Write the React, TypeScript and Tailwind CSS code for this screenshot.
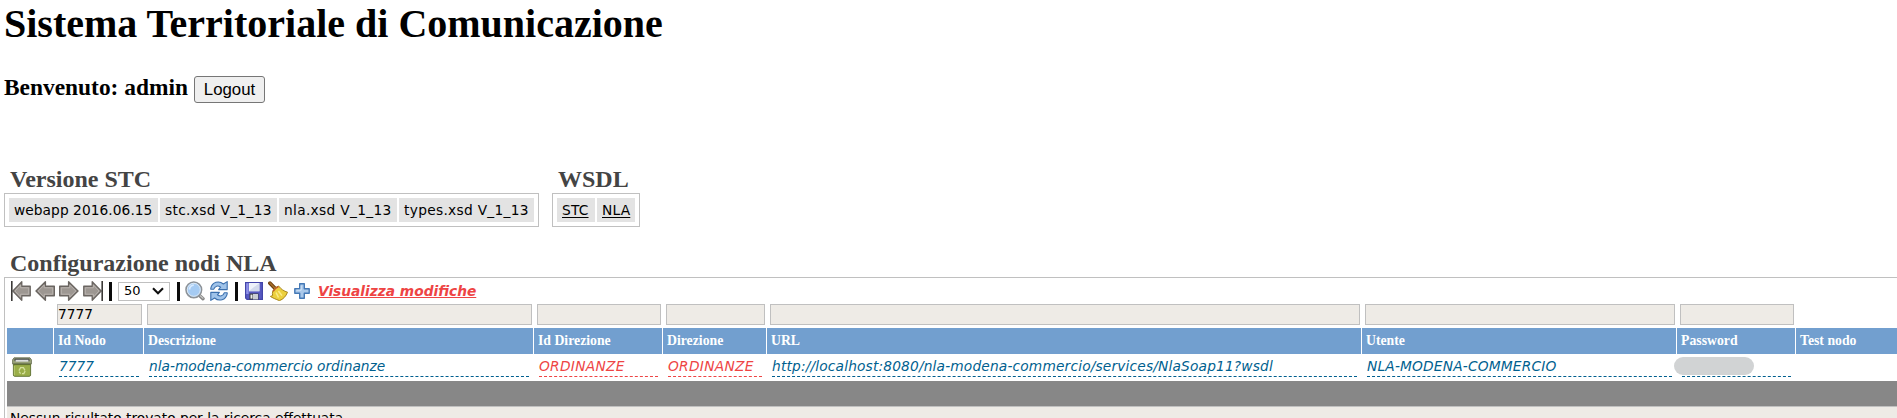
import React from "react";

const ARROW = "M1 10 L10.4 .8 V5.2 H19.3 V14.8 H10.4 V19.2 Z";

function Arrow({ flip = false, bar = false }: { flip?: boolean; bar?: boolean }) {
  return (
    <svg width="20" height="20" viewBox="0 0 20 20" className="shrink-0">
      <g transform={flip ? "translate(20 0) scale(-1 1)" : undefined}>
        <g transform={bar ? "translate(.9 0) scale(.95 1)" : undefined}>
          <path d={ARROW} fill="#9d9792" stroke="#6a6561" strokeWidth="1.4" strokeLinejoin="round" />
          <path d="M3.2 10 L9.2 4 V6.8 H17.7 V13.2 H9.2 V16 Z" fill="none" stroke="#bbb6b1" strokeWidth=".9" />
        </g>
        {bar && <rect x="0" y="0" width="1.6" height="20" fill="#3b3937" />}
      </g>
    </svg>
  );
}

function Magnifier() {
  return (
    <svg width="20" height="20" viewBox="0 0 20 20" className="shrink-0">
      <path d="M14 14 L18 17.7" stroke="#858585" strokeWidth="3.4" strokeLinecap="round" />
      <path d="M14.5 14 L18 17.2" stroke="#c6c6c4" strokeWidth="1.2" strokeLinecap="round" />
      <circle cx="8.8" cy="8.8" r="7.8" fill="#a5cbf3" stroke="#8d9297" strokeWidth="1.6" />
      <circle cx="8.8" cy="8.8" r="6.5" fill="none" stroke="#dce8f3" strokeWidth="1" />
      <path d="M4.5 8.5 A4.4 4.4 0 0 1 8.8 4.2" stroke="#d9ebff" strokeWidth="1.8" fill="none" />
    </svg>
  );
}

function Refresh() {
  const half = "M.8 7.2 C2.2 .9 9 -.8 13.4 3 L17.2 .6 V8.6 H8.6 L10.6 6.2 C8 4.2 4.8 4.8 3.8 8.2 H.8 Z";
  return (
    <svg width="18" height="20" viewBox="0 0 18 20" className="shrink-0">
      <path d={half} fill="#9fc3ea" stroke="#3c70ae" strokeWidth="1.1" strokeLinejoin="round" />
      <path d={half} transform="rotate(180 9 10)" fill="#9fc3ea" stroke="#3c70ae" strokeWidth="1.1" strokeLinejoin="round" />
    </svg>
  );
}

function Floppy() {
  return (
    <svg width="18" height="18" viewBox="0 0 18 18" className="shrink-0">
      <path d="M.6 .6 H17.4 V17.4 H2 L.6 16 Z" fill="#5658c0" stroke="#4345a8" strokeWidth="1.2" />
      <path d="M1.2 1.2 H3.6 V12 H1.2Z" fill="#8f91e8" />
      <rect x="4" y="1" width="10.4" height="8.2" fill="#eef2fa" />
      <path d="M4 9 L14.4 1 V9.2 H4Z" fill="#d3daec" />
      <rect x="4.5" y="11.5" width="9" height="6" fill="#36383c" />
      <rect x="8" y="12" width="5" height="5.4" fill="#c9cdd2" />
      <rect x="5.5" y="12.6" width="2" height="4" fill="#e8eaec" />
    </svg>
  );
}

function Broom() {
  return (
    <svg width="20" height="20" viewBox="0 0 20 20" className="shrink-0">
      <path d="M2 2.2 L7.4 7.8" stroke="#6d3f0d" strokeWidth="3.8" strokeLinecap="round" />
      <path d="M2 2 L7 7.2" stroke="#a8702a" strokeWidth="1.6" strokeLinecap="round" />
      <path d="M4.8 10 C6.2 7.6 8 6 10.6 5 C13 8.2 16 10.2 19.5 11.2 C18.2 15 15 18.6 11.4 19.6 C8 18.4 4 16.6 2.4 15.4 L4.6 14.6 C4.3 13 4.3 11.6 4.8 10Z" fill="#ecd03e" stroke="#a8851c" strokeWidth="1" strokeLinejoin="round" />
      <path d="M5.2 10.4 C6.6 8 8.2 6.6 10.4 5.6" stroke="#c0552a" strokeWidth="1.3" fill="none" />
      <path d="M8 11.5 L10.5 16.5 M10.4 10 L14 14.6" stroke="#fbec8b" strokeWidth="1.5" />
    </svg>
  );
}

function Plus() {
  return (
    <svg width="16" height="16" viewBox="0 0 16 16" className="shrink-0">
      <path d="M5.7 .8 H10.3 V5.7 H15.2 V10.3 H10.3 V15.2 H5.7 V10.3 H.8 V5.7 H5.7 Z" fill="#a9c8ea" stroke="#4478b5" strokeWidth="1.4" strokeLinejoin="round" />
      <path d="M7.2 2.5 V7.2 H2.5" stroke="#d4e4f5" strokeWidth="1" fill="none" />
    </svg>
  );
}

function Bin() {
  return (
    <svg width="20" height="20" viewBox="0 0 20 20" className="shrink-0">
      <path d="M1.4 6.5 H18.6 V18 Q18.6 19.3 17 19.3 H3 Q1.4 19.3 1.4 18Z" fill="#9aae48" stroke="#66783a" strokeWidth="1" />
      <path d="M2.4 9 V18.3" stroke="#b4c56c" strokeWidth="1" />
      <path d="M2 .8 H18 L19.7 3.2 V6.8 H.3 V3.2Z" fill="#97a076" stroke="#646c50" strokeWidth=".8" />
      <rect x="2.4" y="1.5" width="15.2" height="2.8" rx="1" fill="#4f5250" />
      <rect x="3.6" y="2.8" width="12.8" height="1.9" fill="#dcdedb" />
      <path d="M1.6 7.6 H18.4" stroke="#5d6e30" strokeWidth="1" />
      <path d="M6.9 13.6 L8.6 10.7 H11.4 L13 13.4 M13.2 14.2 L11.8 16.6 H10 M8.6 16.6 L7.1 14.6" stroke="#d5e09c" strokeWidth="1.3" fill="none" />
    </svg>
  );
}

const Divider = ({ className = "" }: { className?: string }) => (
  <span className={"h-[19px] w-[3px] shrink-0 bg-[#0c0c0c] " + className} />
);

const COLS = "grid grid-cols-[46px_89px_389px_128px_103px_594px_314px_118px_1fr] gap-x-px";

const columns = ["", "Id Nodo", "Descrizione", "Id Direzione", "Direzione", "URL", "Utente", "Password", "Test nodo"];

const row = [
  { text: "7777", red: false, spacing: "" },
  { text: "nla-modena-commercio ordinanze", red: false, spacing: "" },
  { text: "ORDINANZE", red: true, spacing: "tracking-[0.3px]" },
  { text: "ORDINANZE", red: true, spacing: "tracking-[0.3px]" },
  { text: "http://localhost:8080/nla-modena-commercio/services/NlaSoap11?wsdl", red: false, spacing: "tracking-[0.165px]" },
  { text: "NLA-MODENA-COMMERCIO", red: false, spacing: "tracking-[0.18px]" },
  { text: "", red: false, spacing: "" },
];

function Chip({ text, className, link = false }: { text: string; className: string; link?: boolean }) {
  return (
    <div className={"h-6 overflow-hidden bg-[#e3e3e3] pl-[5px] leading-6 whitespace-nowrap " + className}>
      {link ? <a className="underline underline-offset-2">{text}</a> : text}
    </div>
  );
}

const heading = "pl-1.5 font-['Liberation_Serif',serif] text-[24px] leading-[28px] font-bold text-[#444444]";

export default function App() {
  return (
    <div className="h-[418px] w-full overflow-hidden bg-white pl-1 font-['DejaVu_Sans',sans-serif] text-[13.75px] text-black">
      <h1 className="h-[76px] font-['Liberation_Serif',serif] text-[40px] leading-[48px] font-bold">
        Sistema Territoriale di Comunicazione
      </h1>
      <div className="flex h-[84px] items-start">
        <h3 className="-mt-px w-[190px] font-['Liberation_Serif',serif] text-[23.4px] leading-6 font-bold whitespace-nowrap">
          Benvenuto: admin
        </h3>
        <button className="h-[27px] w-[71px] rounded-[3px] border border-[#767676] bg-[#efefef] font-['Liberation_Sans',sans-serif] text-[16.8px] leading-[25px]">
          Logout
        </button>
      </div>

      <div className="flex gap-[13px] pt-[5px]">
        <section className="w-[535px]">
          <h2 className={heading}>Versione STC</h2>
          <div className="flex h-[34px] gap-0.5 border border-[#c0c0c0] p-1">
            <Chip text="webapp 2016.06.15" className="w-[149px] tracking-[0.06px]" />
            <Chip text="stc.xsd V_1_13" className="w-[117px] tracking-[0.32px]" />
            <Chip text="nla.xsd V_1_13" className="w-[118px] tracking-[0.32px]" />
            <Chip text="types.xsd V_1_13" className="w-[135px] tracking-[0.3px]" />
          </div>
        </section>
        <section className="w-[88px]">
          <h2 className={heading}>WSDL</h2>
          <div className="flex h-[34px] gap-0.5 border border-[#c0c0c0] p-1">
            <Chip text="STC" className="w-[38px] tracking-[0.2px]" link />
            <Chip text="NLA" className="w-[38px] tracking-[0.2px]" link />
          </div>
        </section>
      </div>

      <h2 className={heading + " mt-[22px]"}>Configurazione nodi NLA</h2>
      <div className="h-[200px] border-t border-l border-[#c0c0c0] pl-0.5">
        <div className="flex h-[26px] items-center pl-1">
          <div className="flex gap-1">
            <Arrow bar />
            <Arrow />
            <Arrow flip />
            <Arrow flip bar />
          </div>
          <Divider className="ml-1.5" />
          <div className="ml-1.5 flex h-[19px] w-[52px] shrink-0 items-center justify-between border border-[#c0c0c0] pr-[5px] pl-[5px] text-[13px]">
            <span>50</span>
            <svg width="12" height="8" viewBox="0 0 12 8">
              <path d="M1 1.3 L6 6.3 L11 1.3" fill="none" stroke="#101010" strokeWidth="2.1" />
            </svg>
          </div>
          <Divider className="ml-[7px]" />
          <span className="ml-[5px]"><Magnifier /></span>
          <span className="ml-[5px]"><Refresh /></span>
          <Divider className="ml-[7px]" />
          <span className="ml-[7px]"><Floppy /></span>
          <span className="ml-[5px]"><Broom /></span>
          <span className="ml-1.5"><Plus /></span>
          <a className="ml-2 font-bold whitespace-nowrap text-[#ee4444] italic underline underline-offset-1">Visualizza modifiche</a>
        </div>

        <div className={COLS + " h-6"}>
          {columns.map((c, i) => (
            <div key={i} className="pr-px pl-[3px]">
              {i > 0 && i < 8 && (
                <div className="h-[21px] border border-[#c0c0c0] bg-[#eeebe6] leading-[18px]">{i === 1 ? "7777" : ""}</div>
              )}
            </div>
          ))}
        </div>

        <div className={COLS + " h-[26px]"}>
          {columns.map((c, i) => (
            <div key={i} className="bg-[#729fcf] pl-1 font-['Liberation_Serif',serif] text-[13.75px] leading-[25px] font-bold whitespace-nowrap text-white">
              {c}
            </div>
          ))}
        </div>

        <div className={COLS + " h-[27px]"}>
          <div className="pt-[3px] pl-[5px]"><Bin /></div>
          {row.map((cell, i) => (
            <div key={i} className="relative pr-1 pl-[5px]">
              <div
                className={
                  "h-[23px] border-b border-dashed leading-[25px] whitespace-nowrap italic " + cell.spacing + " " +
                  (cell.red ? "border-[#ee4444] text-[#ee4444]" : "border-[#005f8f] text-[#005f8f]")
                }
              >
                {cell.text}
              </div>
              {i === 6 && <span className="absolute top-[3px] -left-[3px] h-[18px] w-[80px] rounded-full bg-[#d1d3d4]" />}
            </div>
          ))}
          <div />
        </div>

        <div className="h-[25px] bg-[#878787]" />
        <div className="h-10 border-t border-[#c0c0c0] bg-[#eeebe6] pl-[3px] leading-[22px] whitespace-nowrap">
          Nessun risultato trovato per la ricerca effettuata
        </div>
      </div>
    </div>
  );
}
